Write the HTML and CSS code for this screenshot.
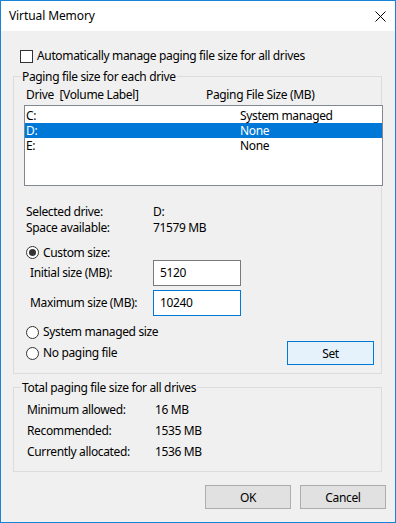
FILE: index.html
```html
<!DOCTYPE html>
<html lang="en">

<head>
    <meta charset="UTF-8">
    <title>Virtual Memory</title>
    <link rel="stylesheet" href="styles.css">
</head>

<body>
    <div class="window">
        <div class="titlebar">
            <span class="title">Virtual Memory</span>
            <span class="close">
                <svg width="11" height="11" viewBox="0 0 11 11">
                    <path d="M0.5 0.5 L10.5 10.5 M10.5 0.5 L0.5 10.5" stroke="#000" stroke-width="1" fill="none"/>
                </svg>
            </span>
        </div>

        <div class="content">
            <div class="check-row">
                <span class="checkbox"></span>
                <span>Automatically manage paging file size for all drives</span>
            </div>

            <div class="group group-drives">
                <div class="legend">Paging file size for each drive</div>
                <div class="list-head">
                    <span class="col-drive">Drive  [Volume Label]</span>
                    <span>Paging File Size (MB)</span>
                </div>
                <div class="listbox">
                    <div class="list-row"><span class="col-drive">C:</span><span>System managed</span></div>
                    <div class="list-row selected"><span class="col-drive">D:</span><span>None</span></div>
                    <div class="list-row"><span class="col-drive">E:</span><span>None</span></div>
                </div>

                <div class="info">
                    <div class="info-row"><span class="info-label">Selected drive:</span><span>D:</span></div>
                    <div class="info-row"><span class="info-label">Space available:</span><span>71579 MB</span></div>
                </div>

                <div class="radio-row first-radio">
                    <span class="radio checked"></span>
                    <span>Custom size:</span>
                </div>
                <div class="field-row">
                    <span class="field-label">Initial size (MB):</span>
                    <div class="textbox">5120</div>
                </div>
                <div class="field-row field-max">
                    <span class="field-label">Maximum size (MB):</span>
                    <div class="textbox focused">10240</div>
                </div>
                <div class="radio-row system-radio">
                    <span class="radio"></span>
                    <span>System managed size</span>
                </div>
                <div class="radio-row set-row">
                    <span class="radio"></span>
                    <span>No paging file</span>
                    <button class="btn btn-set">Set</button>
                </div>
            </div>

            <div class="group group-total">
                <div class="legend">Total paging file size for all drives</div>
                <div class="total-row first-total"><span class="total-label">Minimum allowed:</span><span>16 MB</span></div>
                <div class="total-row"><span class="total-label">Recommended:</span><span>1535 MB</span></div>
                <div class="total-row"><span class="total-label">Currently allocated:</span><span>1536 MB</span></div>
            </div>

            <div class="buttons">
                <button class="btn">OK</button>
                <button class="btn">Cancel</button>
            </div>
        </div>
    </div>
</body>

</html>
```

FILE: styles.css
```css
body {
    margin: 0;
    padding: 0;
    font-family: "Noto Sans", sans-serif;
    font-size: 12px;
    letter-spacing: -0.35px;
    color: #000;
}

.window {
    width: 396px;
    height: 523px;
    box-sizing: border-box;
    border: 1px solid #1883d7;
    background-color: #f0f0f0;
    display: flex;
    flex-direction: column;
}

.titlebar {
    height: 30px;
    background-color: #fff;
    display: flex;
    align-items: center;
    padding-left: 8px;
}

.title {
    flex: 1;
    letter-spacing: -0.1px;
}

.close {
    display: flex;
    margin-right: 9px;
}

.content {
    padding: 0 13px 0 12px;
    display: flex;
    flex-direction: column;
}

span {
    line-height: 16px;
}

.check-row {
    margin-top: 17px;
    height: 16px;
    display: flex;
    align-items: center;
    padding-left: 7px;
}

.checkbox {
    width: 11px;
    height: 11px;
    border: 1px solid #333;
    background-color: #fff;
    margin-right: 4px;
}

/* Gruppenrahmen */
.group {
    border: 1px solid #dcdcdc;
    display: flex;
    flex-direction: column;
}

.legend {
    margin-top: -8px;
    margin-left: 7px;
    padding: 0 1px;
    height: 16px;
    line-height: 16px;
    background-color: #f0f0f0;
    align-self: flex-start;
}

.group-drives {
    margin-top: 12px;
    padding-bottom: 8px;
}

.list-head {
    margin-top: 2px;
    padding-left: 12px;
    display: flex;
    white-space: pre;
}

.list-head .col-drive {
    width: 180px;
}

.listbox {
    margin-top: 2px;
    margin-left: 10px;
    width: 357px;
    height: 77px;
    border: 1px solid #828790;
    background-color: #fff;
    padding-top: 2px;
}

.list-row {
    height: 15px;
    display: flex;
    align-items: center;
    padding-left: 1px;
}

.list-row span {
    line-height: 15px;
}

.list-row .col-drive {
    width: 214px;
}

.list-row.selected {
    background-color: #0078d7;
    color: #fff;
}

.info {
    margin-top: 18px;
    padding-left: 12px;
}

.info-row {
    display: flex;
    height: 16px;
}

.info-label {
    width: 127px;
}

.radio-row {
    display: flex;
    align-items: center;
    padding-left: 12px;
    height: 16px;
}

.radio {
    width: 11px;
    height: 11px;
    border: 1px solid #333;
    border-radius: 50%;
    background-color: #fff;
    margin-right: 4px;
    position: relative;
}

.radio.checked::after {
    content: "";
    position: absolute;
    left: 2px;
    top: 2px;
    width: 7px;
    height: 7px;
    border-radius: 50%;
    background-color: #333;
}

.first-radio {
    margin-top: 9px;
    height: 15px;
}

.field-row {
    display: flex;
    align-items: center;
    padding-left: 16px;
    height: 26px;
}

.field-max {
    margin-top: 4px;
}

.field-label {
    width: 123px;
}

.textbox {
    width: 80px;
    height: 24px;
    line-height: 24px;
    border: 1px solid #7a7a7a;
    background-color: #fff;
    padding-left: 6px;
}

.textbox.focused {
    border-color: #0078d7;
}

.system-radio {
    margin-top: 8px;
}

.set-row {
    margin-top: 1px;
    height: 24px;
}

.btn {
    font-family: "Noto Sans", sans-serif;
    font-size: 12px;
    letter-spacing: -0.35px;
    color: #000;
    width: 86px;
    height: 24px;
    padding: 0;
    border: 1px solid #adadad;
    background-color: #e1e1e1;
}

.btn-set {
    margin-left: auto;
    margin-right: 7px;
    width: 87px;
    border-color: #0078d7;
    background-color: #e5f1fb;
}

.group-total {
    margin-top: 13px;
    padding-bottom: 11px;
}

.total-row {
    display: flex;
    padding-left: 13px;
    margin-top: 5px;
    height: 16px;
}

.total-row.first-total {
    margin-top: 6px;
}

.total-label {
    width: 128px;
}

.buttons {
    margin-top: 13px;
    margin-right: -4px;
    display: flex;
    justify-content: flex-end;
    gap: 9px;
}
```
